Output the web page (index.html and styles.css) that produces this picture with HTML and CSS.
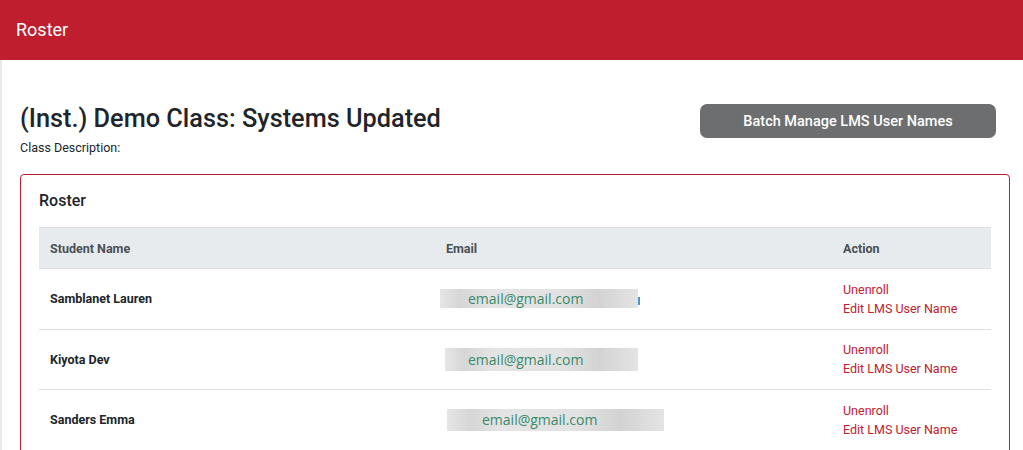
FILE: index.html
```html
<!DOCTYPE html>
<html lang="en">
<head>
<meta charset="utf-8">
<title>Roster</title>
<link rel="stylesheet" href="styles.css">
</head>
<body>
<header class="topbar">Roster</header>
<main class="page">
  <section class="intro">
    <div class="intro-text">
      <h1 class="class-title">(Inst.) Demo Class: Systems Updated</h1>
      <p class="class-desc">Class Description:</p>
    </div>
    <button class="batch-btn" type="button">Batch Manage LMS User Names</button>
  </section>
  <section class="card">
    <h2 class="card-title">Roster</h2>
    <table class="roster">
      <thead>
        <tr>
          <th class="col-name">Student Name</th>
          <th class="col-email">Email</th>
          <th class="col-action">Action</th>
        </tr>
      </thead>
      <tbody>
        <tr>
          <td class="name">Samblanet Lauren</td>
          <td class="email-cell"><span class="email e1">email@gmail.com</span><span class="tail"></span></td>
          <td class="actions"><a href="#">Unenroll</a><a href="#">Edit LMS User Name</a></td>
        </tr>
        <tr>
          <td class="name">Kiyota Dev</td>
          <td class="email-cell"><span class="email e2">email@gmail.com</span></td>
          <td class="actions"><a href="#">Unenroll</a><a href="#">Edit LMS User Name</a></td>
        </tr>
        <tr>
          <td class="name">Sanders Emma</td>
          <td class="email-cell"><span class="email e3">email@gmail.com</span></td>
          <td class="actions"><a href="#">Unenroll</a><a href="#">Edit LMS User Name</a></td>
        </tr>
      </tbody>
    </table>
  </section>
</main>
</body>
</html>
```
FILE: styles.css
```css
* { box-sizing: border-box; }
html, body { margin: 0; padding: 0; height: 450px; overflow: hidden; }
body {
  font-family: Roboto, "Liberation Sans", Arial, sans-serif;
  color: #212529;
  background: #fff;
  display: flex;
  flex-direction: column;
}
.topbar {
  flex: 0 0 60px;
  height: 60px;
  background: #be1e2d;
  color: #fff;
  font-size: 18px;
  line-height: 60px;
  padding-left: 16px;
}
.page {
  flex: 1 1 auto;
  min-height: 0;
  overflow: hidden;
  border-left: 2px solid #e9e9e9;
  padding: 44px 13px 0 18px;
}
.intro {
  display: flex;
  justify-content: space-between;
  align-items: flex-start;
}
.class-title {
  margin: 0;
  font-size: 25.3px;
  font-weight: 500;
  line-height: 30px;
  color: #212529;
}
.class-desc {
  margin: 6px 0 0;
  font-size: 12.5px;
  line-height: 16px;
}
.batch-btn {
  width: 296px;
  height: 34px;
  margin: 0 14px 0 0;
  border: 0;
  border-radius: 7px;
  background: #6d6e70;
  color: #fff;
  font-family: inherit;
  font-size: 14.5px;
  font-weight: 500;
}
.card {
  margin-top: 18px;
  border: 1px solid #be1e2d;
  border-radius: 4px;
  padding: 16px 18px 40px;
}
.card-title {
  margin: 0 0 16px;
  font-size: 16px;
  font-weight: 500;
  line-height: 20px;
}
.roster {
  width: 100%;
  border-collapse: collapse;
  table-layout: fixed;
}
.roster th {
  background: #e8ebee;
  border-top: 1px solid #dee2e6;
  border-bottom: 1px solid #dee2e6;
  text-align: left;
  font-size: 12.5px;
  font-weight: 700;
  color: #495057;
  height: 41px;
  padding: 0 11px;
}
.col-name { width: 396px; }
.col-email { width: 397px; }
.roster td {
  height: 60.5px;
  border-bottom: 1px solid #dee2e6;
  padding: 0 11px;
  vertical-align: middle;
  font-size: 12.5px;
}
.name { font-weight: 700; color: #212529; }
.email {
  display: inline-block;
  height: 19px;
  line-height: 19px;
  font-family: "Open Sans", "Noto Sans", sans-serif;
  font-size: 14px;
  color: #3a8a6b;
  white-space: nowrap;
  background: linear-gradient(90deg, #e6e6e6 0%, #d6d6d6 10%, #e4e4e4 25%, #e2e2e2 60%, #d3d3d3 80%, #e4e4e4 100%);
}
.e1 { margin-left: -6px; width: 198px; padding-left: 28px; }
.e2 { margin-left: -1px; width: 193px; padding-left: 23px; height: 23px; line-height: 23px; }
.e3 { margin-left: 1px; width: 217px; padding-left: 35px; height: 22px; line-height: 22px; }
.tail {
  display: inline-block;
  width: 2px;
  height: 8px;
  background: #4f8fd6;
  vertical-align: middle;
}
.actions a {
  display: block;
  color: #c0202f;
  text-decoration: none;
  font-size: 12.5px;
  line-height: 19px;
}
```
